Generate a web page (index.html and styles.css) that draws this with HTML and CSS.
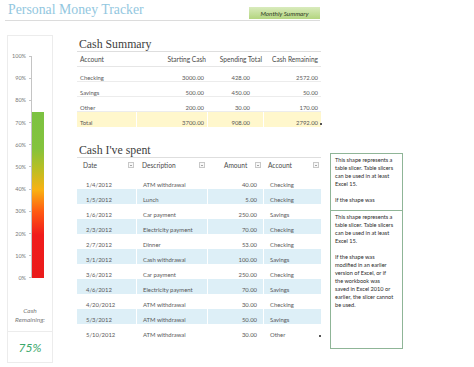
FILE: index.html
```html
<!DOCTYPE html>
<html>
<head>
<meta charset="utf-8">
<link rel="stylesheet" href="styles.css">
</head>
<body>
<div class="header">
  <div class="title">Personal Money Tracker</div>
  <div class="btn">Monthly Summary</div>
</div>
<div class="main">
  <div class="gauge">
    <div class="chart">
      <div class="labels">
        <div class="lbl">100%<span class="tick"></span></div>
        <div class="lbl">90%<span class="tick"></span></div>
        <div class="lbl">80%<span class="tick"></span></div>
        <div class="lbl">70%<span class="tick"></span></div>
        <div class="lbl">60%<span class="tick"></span></div>
        <div class="lbl">50%<span class="tick"></span></div>
        <div class="lbl">40%<span class="tick"></span></div>
        <div class="lbl">30%<span class="tick"></span></div>
        <div class="lbl">20%<span class="tick"></span></div>
        <div class="lbl">10%<span class="tick"></span></div>
        <div class="lbl">0%<span class="tick"></span></div>
      </div>
      <div class="plot">
        <div class="bar" style="height:75%"></div>
      </div>
    </div>
    <div class="caption">Cash<br>Remaining:</div>
    <div class="pct">75%</div>
  </div>

  <div class="content">
    <h2 class="heading">Cash Summary</h2>
    <div class="tbl sum">
      <div class="row hdr">
        <div class="c c1">Account</div>
        <div class="c c2 r">Starting Cash</div>
        <div class="c c3 r">Spending Total</div>
        <div class="c c4 r">Cash Remaining</div>
      </div>
      <div class="row line">
        <div class="c c1">Checking</div>
        <div class="c c2 r">3000.00</div>
        <div class="c c3 r">428.00</div>
        <div class="c c4 r">2572.00</div>
      </div>
      <div class="row line">
        <div class="c c1">Savings</div>
        <div class="c c2 r">500.00</div>
        <div class="c c3 r">450.00</div>
        <div class="c c4 r">50.00</div>
      </div>
      <div class="row line">
        <div class="c c1">Other</div>
        <div class="c c2 r">200.00</div>
        <div class="c c3 r">30.00</div>
        <div class="c c4 r">170.00</div>
      </div>
      <div class="row total">
        <div class="c c1">Total</div>
        <div class="c c2 r">3700.00</div>
        <div class="c c3 r">908.00</div>
        <div class="c c4 r">2792.00<span class="handle"></span></div>
      </div>
    </div>

    <h2 class="heading spent-h">Cash I've spent</h2>
    <div class="tbl spent">
      <div class="row hdr">
        <div class="c c1">Date<span class="dd"></span></div>
        <div class="c c2">Description<span class="dd"></span></div>
        <div class="c c3 amt">Amount<span class="dd"></span></div>
        <div class="c c4 acc">Account<span class="dd"></span></div>
      </div>
      <div class="row"><div class="c c1">1/4/2012</div><div class="c c2">ATM withdrawal</div><div class="c c3 r">40.00</div><div class="c c4">Checking</div></div>
      <div class="row band"><div class="c c1">1/5/2012</div><div class="c c2">Lunch</div><div class="c c3 r">5.00</div><div class="c c4">Checking</div></div>
      <div class="row"><div class="c c1">1/6/2012</div><div class="c c2">Car payment</div><div class="c c3 r">250.00</div><div class="c c4">Savings</div></div>
      <div class="row band"><div class="c c1">2/3/2012</div><div class="c c2">Electricity payment</div><div class="c c3 r">70.00</div><div class="c c4">Checking</div></div>
      <div class="row"><div class="c c1">2/7/2012</div><div class="c c2">Dinner</div><div class="c c3 r">53.00</div><div class="c c4">Checking</div></div>
      <div class="row band"><div class="c c1">3/1/2012</div><div class="c c2">Cash withdrawal</div><div class="c c3 r">100.00</div><div class="c c4">Savings</div></div>
      <div class="row"><div class="c c1">3/6/2012</div><div class="c c2">Car payment</div><div class="c c3 r">250.00</div><div class="c c4">Checking</div></div>
      <div class="row band"><div class="c c1">4/6/2012</div><div class="c c2">Electricity payment</div><div class="c c3 r">70.00</div><div class="c c4">Savings</div></div>
      <div class="row"><div class="c c1">4/20/2012</div><div class="c c2">ATM withdrawal</div><div class="c c3 r">30.00</div><div class="c c4">Checking</div></div>
      <div class="row band"><div class="c c1">5/3/2012</div><div class="c c2">ATM withdrawal</div><div class="c c3 r">50.00</div><div class="c c4">Savings</div></div>
      <div class="row"><div class="c c1">5/10/2012</div><div class="c c2">ATM withdrawal</div><div class="c c3 r">30.00</div><div class="c c4">Other<span class="handle h2"></span></div></div>
    </div>
  </div>

  <div class="slicers">
    <div class="slicer s1">
      <p>This shape represents a<br>table slicer. Table slicers<br>can be used in at least<br>Excel 15.</p>
      <p>If the shape was</p>
    </div>
    <div class="slicer s2">
      <p>This shape represents a<br>table slicer. Table slicers<br>can be used in at least<br>Excel 15.</p>
      <p>If the shape was<br>modified in an earlier<br>version of Excel, or if<br>the workbook was<br>saved in Excel 2010 or<br>earlier, the slicer cannot<br>be used.</p>
    </div>
  </div>
</div>
</body>
</html>
```

FILE: styles.css
```css
* { box-sizing: border-box; }
html, body { margin: 0; padding: 0; background: #fff; }
body {
  width: 474px;
  height: 367px;
  overflow: hidden;
  font-family: "Lato", "Liberation Sans", sans-serif;
  color: #595959;
}

.header {
  margin-left: 5px;
  width: 315px;
  height: 21px;
  border-bottom: 1px solid #dcdcdc;
  display: flex;
  justify-content: space-between;
  align-items: flex-end;
}
.title {
  align-self: flex-start;
  padding-top: 3px;
  padding-left: 3px;
  font-family: "Liberation Serif", serif;
  font-size: 13.8px;
  line-height: 14px;
  color: #93c7e0;
}
.btn {
  width: 71px;
  height: 12px;
  margin-bottom: 1px;
  background: linear-gradient(#d9ebbd, #b3d57f);
  font-size: 6.3px;
  font-style: italic;
  color: #2f3b1f;
  display: flex;
  align-items: center;
  justify-content: center;
}

.main {
  display: flex;
  align-items: flex-start;
  margin-top: 14px;
}

/* gauge */
.gauge {
  margin-left: 7px;
  width: 46px;
  height: 328px;
  border: 1px solid #ececec;
  display: flex;
  flex-direction: column;
  padding-top: 16px;
}
.chart {
  display: flex;
  height: 230px;
}
.labels {
  width: 23px;
  display: flex;
  flex-direction: column;
  justify-content: space-between;
}
.lbl {
  height: 8px;
  line-height: 8px;
  font-size: 5.5px;
  color: #7a7a7a;
  display: flex;
  justify-content: flex-end;
  align-items: center;
  gap: 3px;
}
.tick { width: 2px; height: 1px; background: #c4c4c4; }
.plot {
  margin: 4px 0;
  border-left: 1px solid #c4c4c4;
  display: flex;
  flex-direction: column;
  justify-content: flex-end;
}
.bar {
  width: 12px;
  background: linear-gradient(to top,
    #ea1b1b 0%, #f01c1c 26%, #ff5a12 40%, #f9b112 53%, #b8bf24 66%, #84c33d 78%, #7cc242 100%);
}
.caption {
  margin-top: 24px;
  text-align: center;
  font-size: 6.5px;
  line-height: 9px;
  font-style: italic;
  color: #7a7a7a;
}
.pct {
  margin-top: 7px;
  border-top: 1px solid #ececec;
  padding-top: 8px;
  text-align: center;
  font-size: 12px;
  line-height: 15px;
  font-style: italic;
  color: #3aa86b;
}

/* content */
.content {
  margin-left: 24px;
  width: 244px;
}
.heading {
  margin: 0;
  padding: 2px 0 0 2px;
  font-family: "Liberation Serif", serif;
  font-weight: normal;
  font-size: 11.8px;
  line-height: 14px;
  color: #404040;
  border-bottom: 1px solid #dedede;
}
.spent-h { margin-top: 14px; }

.tbl .row {
  display: grid;
  grid-template-columns: 59px 70px 55px 57px;
  column-gap: 1px;
  height: 15px;
}
.tbl .hdr { height: 15px; }
.c {
  position: relative;
  font-size: 5.9px;
  line-height: 8px;
  padding-top: 7px;
  white-space: nowrap;
}
.hdr .c {
  font-size: 6.6px;
  padding-top: 3px;
  color: #4a4a4a;
}
.r { text-align: right; }

.sum .hdr { border-bottom: 1px solid #e6e6e6; }
.sum .line { border-bottom: 1px solid #ececec; }
.sum .c1 { padding-left: 3px; }
.sum .c2 { padding-right: 3px; }
.sum .c3 { padding-right: 13px; }
.sum .c4 { padding-right: 3px; }
.sum .hdr .c2 { padding-right: 1px; }
.sum .hdr .c3 { padding-right: 1px; }
.sum .hdr .c4 { padding-right: 3px; }
.total .c { background: #fff7cc; }

.spent .hdr { height: 16px; }
.spent .c1 { padding-left: 9px; }
.spent .c2 { padding-left: 6px; }
.spent .c3 { padding-right: 6px; }
.spent .c4 { padding-left: 6px; }
.spent .hdr .c1 { padding-left: 6px; }
.spent .hdr .c2 { padding-left: 5px; }
.spent .hdr .amt { padding-left: 16px; }
.spent .hdr .acc { padding-left: 4px; }
.band .c { background: #ddeff7; }

.dd {
  position: absolute;
  right: 2px;
  top: 4px;
  width: 6px;
  height: 6px;
  border: 1px solid #c8c8c8;
  background: #f8f8f8;
}
.dd::after {
  content: "";
  position: absolute;
  left: 1px;
  top: 1.5px;
  border-left: 1.5px solid transparent;
  border-right: 1.5px solid transparent;
  border-top: 1.5px solid #555;
}
.handle {
  position: absolute;
  right: -1px;
  bottom: 2px;
  width: 2px;
  height: 2px;
  background: #555;
}
.h2 { right: 0; }

/* slicers */
.slicers {
  margin-left: 9px;
  margin-top: 118px;
  width: 73px;
}
.slicer {
  border: 1px solid #8fb597;
  padding: 2px 2px 0 4px;
  font-size: 5.6px;
  line-height: 8px;
  color: #2b2b2b;
  white-space: nowrap;
}
.slicer p { margin: 0 0 8px 0; }
.s1 { height: 58px; }
.s2 { height: 139px; margin-top: -1px; }
```
